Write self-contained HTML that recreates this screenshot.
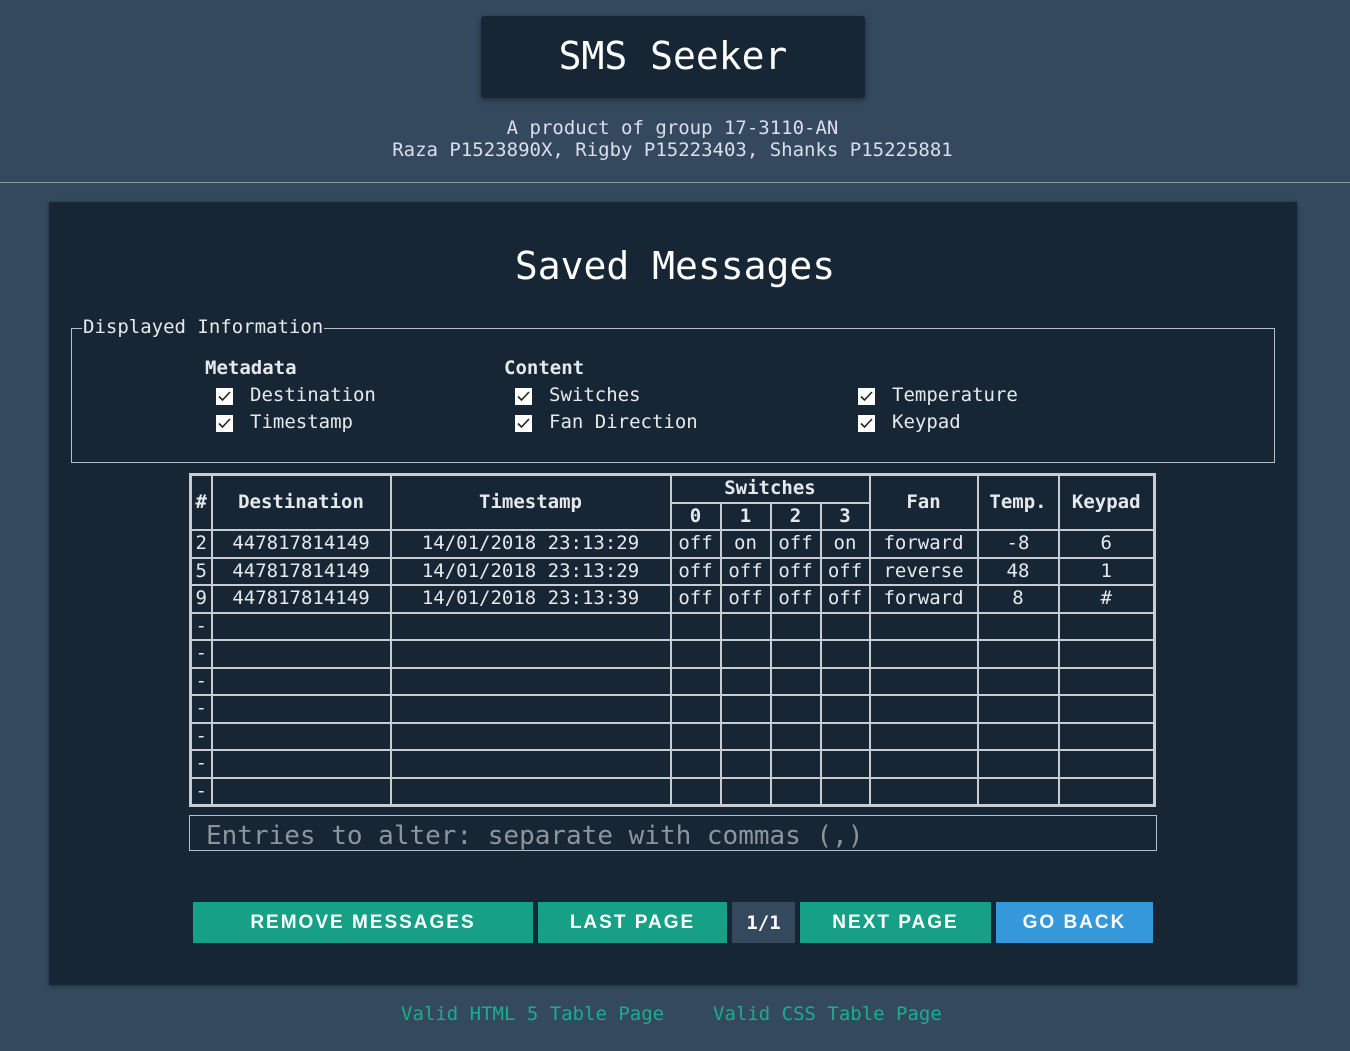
<!DOCTYPE html><html><head><style>
body{margin:0;background:#34495e;width:1350px;height:1051px;position:relative;font-family:"DejaVu Sans Mono","Liberation Mono",monospace;color:#e6e9ec;overflow:hidden}
.a{position:absolute}
.hd{left:481px;top:16px;width:384px;height:82px;background:#172634;box-shadow:0 2px 6px rgba(0,0,0,.4);border-radius:3px;font-size:38px;color:#fff;text-align:center;line-height:80px}
.sub{left:0;width:1345px;top:117px;text-align:center;font-size:19px;line-height:22px;color:#dde}
.line{left:0;width:1350px;top:182px;height:1px;background:#8a98a6}
.panel{left:49px;top:202px;width:1248px;height:783px;background:#172634;box-shadow:0 1px 4px rgba(0,0,0,.4)}
.title{left:0;width:1350px;top:244px;text-align:center;font-size:38px;color:#fff}
.fs{left:71px;top:328px;width:1202px;height:133px;border:1px solid #b8bfc6}
.lg{left:82px;top:316px;background:#172634;font-size:19px;padding:0 1px}
.t19{font-size:19px}
.b{font-weight:bold}
.cb{width:17px;height:17px;background:#fff}
.cb svg{display:block}
table{position:absolute;left:189px;top:473px;border-collapse:collapse;border:3px solid #c8ccd0;font-size:19px;table-layout:fixed}
td,th{border:2px solid #c8ccd0;padding:0;text-align:center;height:25.5px;line-height:25px;white-space:nowrap}
th{font-weight:bold}
.inp{left:189px;top:815px;width:966px;height:34px;border:1px solid #b8bfc6;font-size:26px;color:#8d959c;line-height:40px;text-indent:16px}
.btn{top:902px;height:41px;background:#16a085;color:#fff;font-family:"Liberation Sans",sans-serif;font-weight:bold;font-size:19px;letter-spacing:2px;text-align:center;line-height:42px}
.ft{top:1003px;font-size:19px;color:#1aae8f}
</style></head><body>
<div class="a hd">SMS Seeker</div>
<div class="a sub">A product of group 17-3110-AN<br>Raza P1523890X, Rigby P15223403, Shanks P15225881</div>
<div class="a line"></div>
<div class="a panel"></div>
<div class="a title">Saved Messages</div>
<div class="a fs"></div>
<div class="a lg">Displayed Information</div>
<div class="a t19 b" style="left:205px;top:357px">Metadata</div>
<div class="a t19 b" style="left:504px;top:357px">Content</div>
<div class="a cb" style="left:216px;top:388px"><svg width="17" height="17"><path d="M3 8.5l3.5 3.5 7.5-8" stroke="#222" stroke-width="1.6" fill="none"/></svg></div><div class="a t19" style="left:250px;top:384px">Destination</div>
<div class="a cb" style="left:216px;top:415px"><svg width="17" height="17"><path d="M3 8.5l3.5 3.5 7.5-8" stroke="#222" stroke-width="1.6" fill="none"/></svg></div><div class="a t19" style="left:250px;top:411px">Timestamp</div>
<div class="a cb" style="left:515px;top:388px"><svg width="17" height="17"><path d="M3 8.5l3.5 3.5 7.5-8" stroke="#222" stroke-width="1.6" fill="none"/></svg></div><div class="a t19" style="left:549px;top:384px">Switches</div>
<div class="a cb" style="left:515px;top:415px"><svg width="17" height="17"><path d="M3 8.5l3.5 3.5 7.5-8" stroke="#222" stroke-width="1.6" fill="none"/></svg></div><div class="a t19" style="left:549px;top:411px">Fan Direction</div>
<div class="a cb" style="left:858px;top:388px"><svg width="17" height="17"><path d="M3 8.5l3.5 3.5 7.5-8" stroke="#222" stroke-width="1.6" fill="none"/></svg></div><div class="a t19" style="left:892px;top:384px">Temperature</div>
<div class="a cb" style="left:858px;top:415px"><svg width="17" height="17"><path d="M3 8.5l3.5 3.5 7.5-8" stroke="#222" stroke-width="1.6" fill="none"/></svg></div><div class="a t19" style="left:892px;top:411px">Keypad</div>
<table>
<colgroup><col style="width:21px"><col style="width:179px"><col style="width:280px"><col style="width:50px"><col style="width:50px"><col style="width:50px"><col style="width:49px"><col style="width:108px"><col style="width:81px"><col style="width:96px"></colgroup>
<tr><th rowspan="2">#</th><th rowspan="2">Destination</th><th rowspan="2">Timestamp</th><th colspan="4">Switches</th><th rowspan="2">Fan</th><th rowspan="2">Temp.</th><th rowspan="2">Keypad</th></tr>
<tr><th>0</th><th>1</th><th>2</th><th>3</th></tr>
<tr><td>2</td><td>447817814149</td><td>14/01/2018 23:13:29</td><td>off</td><td>on</td><td>off</td><td>on</td><td>forward</td><td>-8</td><td>6</td></tr>
<tr><td>5</td><td>447817814149</td><td>14/01/2018 23:13:29</td><td>off</td><td>off</td><td>off</td><td>off</td><td>reverse</td><td>48</td><td>1</td></tr>
<tr><td>9</td><td>447817814149</td><td>14/01/2018 23:13:39</td><td>off</td><td>off</td><td>off</td><td>off</td><td>forward</td><td>8</td><td>#</td></tr>
<tr><td>-</td><td></td><td></td><td></td><td></td><td></td><td></td><td></td><td></td><td></td></tr>
<tr><td>-</td><td></td><td></td><td></td><td></td><td></td><td></td><td></td><td></td><td></td></tr>
<tr><td>-</td><td></td><td></td><td></td><td></td><td></td><td></td><td></td><td></td><td></td></tr>
<tr><td>-</td><td></td><td></td><td></td><td></td><td></td><td></td><td></td><td></td><td></td></tr>
<tr><td>-</td><td></td><td></td><td></td><td></td><td></td><td></td><td></td><td></td><td></td></tr>
<tr><td>-</td><td></td><td></td><td></td><td></td><td></td><td></td><td></td><td></td><td></td></tr>
<tr><td>-</td><td></td><td></td><td></td><td></td><td></td><td></td><td></td><td></td><td></td></tr>
</table>
<div class="a inp">Entries to alter: separate with commas (,)</div>
<div class="a btn" style="left:193px;width:340px">REMOVE MESSAGES</div>
<div class="a btn" style="left:538px;width:189px">LAST PAGE</div>
<div class="a btn" style="left:732px;width:63px;background:#34495e;font-family:'DejaVu Sans Mono',monospace;letter-spacing:0">1/1</div>
<div class="a btn" style="left:800px;width:191px">NEXT PAGE</div>
<div class="a btn" style="left:996px;width:157px;background:#3498db">GO BACK</div>
<div class="a ft" style="left:401px">Valid HTML 5 Table Page</div>
<div class="a ft" style="left:713px">Valid CSS Table Page</div>
</body></html>
